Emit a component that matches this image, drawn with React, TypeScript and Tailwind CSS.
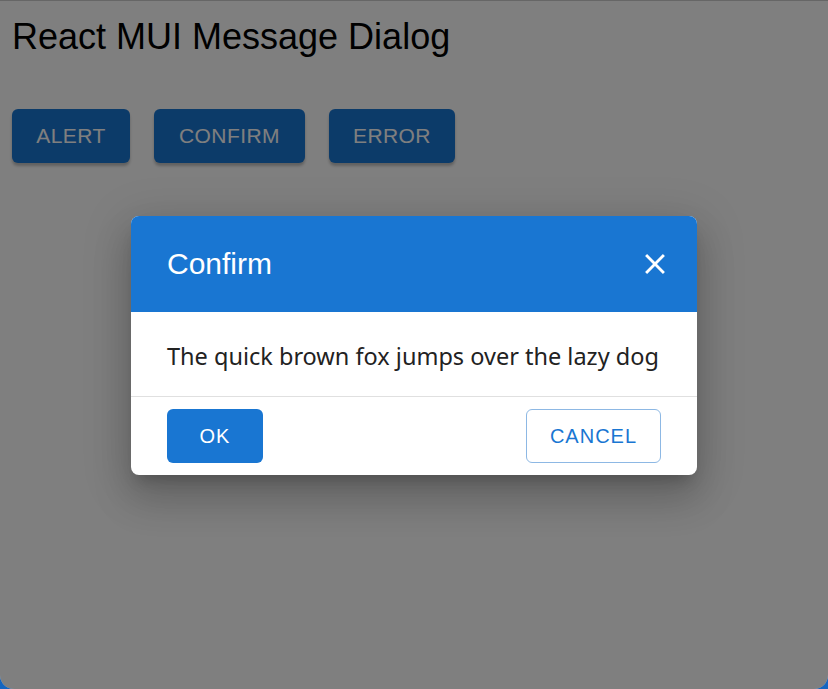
import React from "react";

const CloseIcon = () => (
  <svg width="34" height="34" viewBox="0 0 24 24" fill="currentColor">
    <path d="M19 6.41 17.59 5 12 10.59 6.41 5 5 6.41 10.59 12 5 17.59 6.41 19 12 13.41 17.59 19 19 17.59 13.41 12z" />
  </svg>
);

const actions = [
  { label: "Alert", w: "w-[118px]" },
  { label: "Confirm", w: "w-[151px]" },
  { label: "Error", w: "w-[126px]" },
];

export default function App() {
  return (
    <div className="bg-[#1565c0] w-[828px] h-[689px]">
      <div
        className="relative w-full h-full overflow-hidden rounded-b-[14px] bg-white border-t border-[#666]"
        style={{ fontFamily: '"Liberation Sans", Arial, sans-serif' }}
      >
        <div className="px-3">
          <h1 className="text-[36px] leading-[40px] pt-[16px] text-black">React MUI Message Dialog</h1>
          <div className="flex gap-6 mt-[52px]">
            {actions.map((a) => (
              <button
                key={a.label}
                className={`${a.w} h-[54px] flex items-center justify-center rounded-[6px] bg-[#1976d2] text-white text-[21px] uppercase tracking-[0.02em] shadow-[0_3px_3px_rgba(0,0,0,0.25)]`}
              >
                {a.label}
              </button>
            ))}
          </div>
        </div>

        <div className="absolute inset-0 bg-black/50 flex items-center justify-center">
          <div className="w-[566px] bg-white rounded-[8px] overflow-hidden shadow-[0_11px_15px_-7px_rgba(0,0,0,0.2),0_24px_38px_3px_rgba(0,0,0,0.14),0_9px_46px_8px_rgba(0,0,0,0.12)]">
            <div className="h-[96px] bg-[#1976d2] flex items-center justify-between pl-[36px] pr-[25px] text-white">
              <span className="text-[30px]">Confirm</span>
              <CloseIcon />
            </div>
            <div
              className="h-[84px] flex items-center pt-[6px] px-[36px] text-[23.5px] text-[#222]"
              style={{ fontFamily: '"Noto Sans", "Open Sans", sans-serif' }}
            >
              The quick brown fox jumps over the lazy dog
            </div>
            <div className="border-t border-[#e0e0e0] h-[79px] flex items-center justify-between px-[36px]">
              <button className="h-[54px] w-[96px] rounded-[6px] bg-[#1976d2] text-white text-[20px] tracking-[0.05em]">
                OK
              </button>
              <button className="h-[54px] w-[135px] rounded-[6px] border border-[#8db8e4] text-[#1976d2] text-[20px] tracking-[0.05em]">
                CANCEL
              </button>
            </div>
          </div>
        </div>
      </div>
    </div>
  );
}
